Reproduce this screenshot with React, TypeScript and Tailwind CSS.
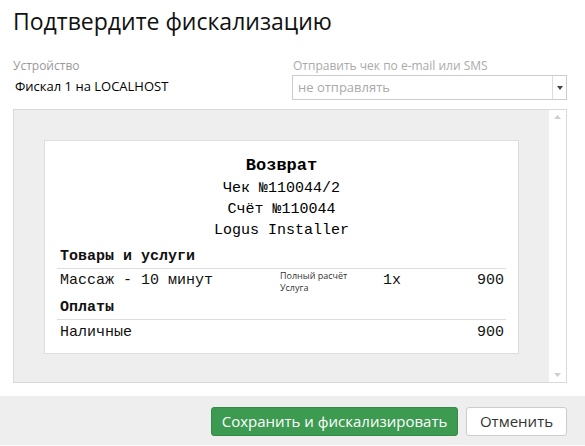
const sans = "font-['Open_Sans','Noto_Sans',sans-serif]";
const mono = "font-['Liberation_Mono','Courier_New',monospace]";

const ReceiptHeader = () => (
  <div className="text-center text-black">
    <div className="text-[17px] font-bold leading-[24px]">Возврат</div>
    <div className="text-[15px] leading-[21px]">Чек №110044/2</div>
    <div className="text-[15px] leading-[21px]">Счёт №110044</div>
    <div className="text-[15px] leading-[21px]">Logus Installer</div>
  </div>
);

const Section = ({ title }: { title: string }) => (
  <div className="mt-[4px] border-b border-[#dddddd] px-[3px] pb-[1px] pt-[2px] text-[15px] font-bold leading-[20px]">
    {title}
  </div>
);

const Receipt = () => (
  <div className={`${mono} border border-[#dddddd] bg-white px-[12px] pt-[13px] pb-[10px] text-[#111]`}>
    <ReceiptHeader />
    <Section title="Товары и услуги" />
    <div className="grid grid-cols-[220px_103px_1fr_auto] pl-[3px] pr-[2px]">
      <div className="pt-[2px] text-[15px] leading-[20px]">Массаж - 10 минут</div>
      <div className={`${sans} pt-[1px] text-[9px] leading-[12px] text-[#333]`}>
        <div>Полный расчёт</div>
        <div>Услуга</div>
      </div>
      <div className="pt-[2px] text-[15px] leading-[20px]">1x</div>
      <div className="pt-[2px] text-right text-[15px] leading-[20px]">900</div>
    </div>
    <div className="mt-[-2px]">
      <Section title="Оплаты" />
    </div>
    <div className="flex justify-between pl-[3px] pr-[2px] pt-[3px] text-[15px] leading-[20px]">
      <span>Наличные</span>
      <span>900</span>
    </div>
  </div>
);

const App = () => {
  return (
    <div className={`${sans} min-h-screen w-[585px] bg-white`}>
      <div className="pl-[13px] pr-[18px]">
        <h1 className="pt-[6px] text-[23px] font-medium leading-[30px] text-[#111]">Подтвердите фискализацию</h1>

        <div className="mt-[22px] flex">
          <div className="flex-1">
            <div className="text-[12px] leading-[16px] text-[#999]">Устройство</div>
            <div className="mt-[2px] pl-[2px] text-[13px] leading-[20px] text-black">Фискал 1 на LOCALHOST</div>
          </div>
          <div className="w-[275px]">
            <div className="pl-[1px] text-[12px] leading-[16px] text-[#aaa]">Отправить чек по e-mail или SMS</div>
            <div className="mt-[1px] flex h-[25px] items-stretch border border-[#cccccc] bg-white">
              <div className="flex flex-1 items-center pl-[5px] text-[13px] text-[#aaa]">не отправлять</div>
              <div className="flex w-[14px] items-center justify-center border-l border-[#dddddd]">
                <svg width="6" height="4" viewBox="0 0 6 4">
                  <path d="M0 0h6L3 4z" fill="#444" />
                </svg>
              </div>
            </div>
          </div>
        </div>

        <div className="mt-[9px] flex h-[274px] border border-[#d9d9d9] bg-[#eeeeee]">
          <div className="flex-1 p-[30px]">
            <Receipt />
          </div>
          <div className="flex w-[17px] flex-col items-center justify-between bg-white py-[5px]">
            <svg width="7" height="4" viewBox="0 0 7 4">
              <path d="M0 4h7L3.5 0z" fill="#cfcfcf" />
            </svg>
            <svg width="7" height="4" viewBox="0 0 7 4">
              <path d="M0 0h7L3.5 4z" fill="#cfcfcf" />
            </svg>
          </div>
        </div>
      </div>

      <div className="mt-[13px] flex h-[49px] justify-end gap-[8px] bg-[#eeeeee] pl-[13px] pr-[18px] pt-[11px]">
        <button className="h-[29px] w-[247px] rounded-[3px] border border-[#358a47] bg-[#3d9a51] text-[15px] text-white">
          Сохранить и фискализировать
        </button>
        <button className="h-[29px] w-[101px] rounded-[3px] border border-[#cccccc] bg-white text-[15px] text-[#333]">
          Отменить
        </button>
      </div>
    </div>
  );
};

export default App;
